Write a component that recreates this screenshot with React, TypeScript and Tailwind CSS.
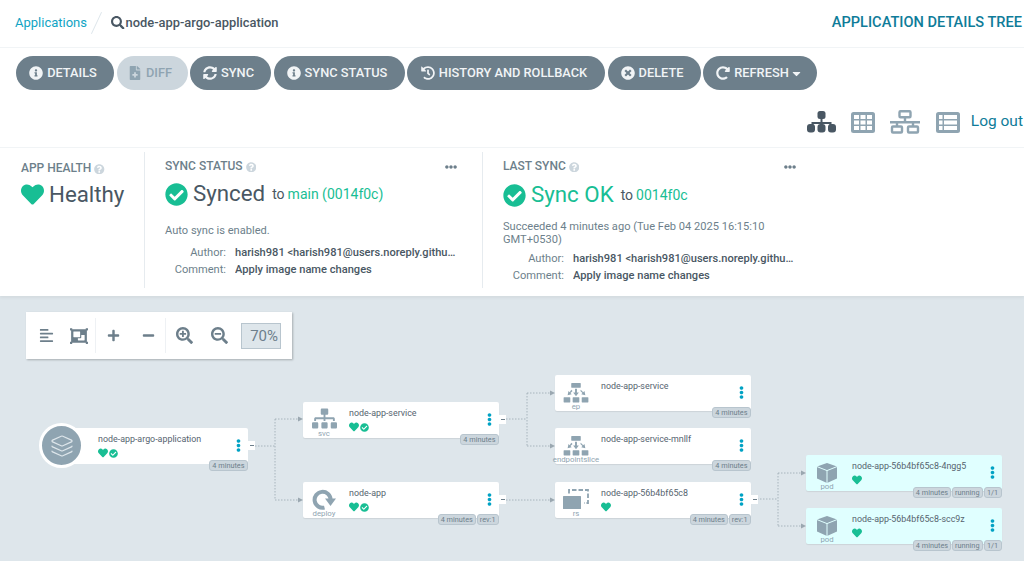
import type { ReactNode } from 'react';
import {
  FaAlignLeft, FaCaretDown, FaCheckCircle, FaEllipsisH, FaEllipsisV, FaFileMedical, FaHeart,
  FaHistory, FaInfoCircle, FaMinus, FaObjectGroup, FaPlus, FaQuestionCircle, FaRedoAlt,
  FaSearch, FaSearchMinus, FaSearchPlus, FaSitemap, FaSyncAlt, FaTimesCircle,
} from 'react-icons/fa';
import { Layers } from 'lucide-react';

const buttons = [
  { label: 'DETAILS', icon: <FaInfoCircle />, width: 'w-[98px]' },
  { label: 'DIFF', icon: <FaFileMedical />, width: 'w-[71px]', disabled: true },
  { label: 'SYNC', icon: <FaSyncAlt />, width: 'w-[81px]' },
  { label: 'SYNC STATUS', icon: <FaInfoCircle />, width: 'w-[131px]' },
  { label: 'HISTORY AND ROLLBACK', icon: <FaHistory />, width: 'w-[198px]' },
  { label: 'DELETE', icon: <FaTimesCircle />, width: 'w-[93px]' },
  { label: 'REFRESH', icon: <FaRedoAlt />, width: 'w-[114px]', caret: true },
];

const TreeViewIcon = () => (
  <svg viewBox="0 0 29 22" className="w-[29px] h-[22px] mr-[15px] fill-[#495763]">
    <rect x="10.5" y="0" width="8" height="8" rx="2.5" />
    <path d="M13.5 7h2v4h9v4h-2v-2h-7v2h-2v-2h-7v2h-2v-4h9z" />
    <rect x="0" y="13" width="8" height="8.5" rx="3" />
    <rect x="10.5" y="13" width="8" height="8.5" rx="3" />
    <rect x="21" y="13" width="8" height="8.5" rx="3" />
  </svg>
);

const PodViewIcon = () => (
  <svg viewBox="0 0 24 21" className="w-[24px] h-[21px] mr-[15px]">
    <rect width="24" height="21" rx="2.5" fill="#8fa4b1" />
    {[3, 9.5, 16].map((x) =>
      [3, 8.5, 14].map((y) => <rect key={`${x}-${y}`} x={x} y={y} width="5" height="4" fill="#fff" />),
    )}
  </svg>
);

const NetworkViewIcon = () => (
  <svg viewBox="0 0 30 24" className="w-[30px] h-[24px] mr-[16px] fill-none stroke-[#8fa4b1]" strokeWidth="2.4">
    <rect x="9.5" y="1.2" width="11" height="6" rx="1" />
    <path d="M15 7v5M0 12.2h30M7 12v4M23 12v4" />
    <rect x="2" y="16.5" width="10" height="6" rx="1" />
    <rect x="18" y="16.5" width="10" height="6" rx="1" />
  </svg>
);

const ListViewIcon = () => (
  <svg viewBox="0 0 24 21" className="w-[24px] h-[21px] mr-[11px]">
    <rect width="24" height="21" rx="2.5" fill="#8fa4b1" />
    {[3, 8.5, 14].map((y) => (
      <g key={y} fill="#fff">
        <rect x="3" y={y} width="3.5" height="4" />
        <rect x="8" y={y} width="13" height="4" />
      </g>
    ))}
  </svg>
);

const EndpointIcon = () => (
  <svg viewBox="0 0 26 21" className="w-[26px] h-[20px] mt-[4px] fill-[#8fa4b1]">
    <rect x="8" y="0" width="10" height="5" rx="0.5" />
    <rect x="0" y="15" width="7" height="5.5" rx="0.5" />
    <rect x="9.5" y="15" width="7" height="5.5" rx="0.5" />
    <rect x="19" y="15" width="7" height="5.5" rx="0.5" />
    <path d="M12 6h2v4h2l-3 4-3-4h2zM8 7l1.4 1.4-2.2 2.2 1.3 1.3-4.3.9.9-4.3 1.3 1.3zM18 7l2.6 2.8 1.3-1.3.9 4.3-4.3-.9 1.3-1.3-2.2-2.2z" />
  </svg>
);

const ReplicaIcon = () => (
  <svg viewBox="0 0 26 20" className="w-[26px] h-[20px] mt-[3px]">
    <rect x="0" y="7" width="18" height="13" fill="#8fa4b1" rx="0.5" />
    <path d="M6 4.5V1h19v13h-4" fill="none" stroke="#8fa4b1" strokeWidth="1.8" strokeDasharray="4.5 2" />
  </svg>
);

const DeployIcon = () => (
  <svg viewBox="0 0 24 21" className="w-[24px] h-[21px] mt-[3px]">
    <path d="M18.6 10.5A8 8 0 1 0 12.5 18.6" fill="none" stroke="#8fa4b1" strokeWidth="4" />
    <path d="M13 9.5H24L18.5 17z" fill="#8fa4b1" />
  </svg>
);

const PodIcon = () => (
  <svg viewBox="0 0 20 20" className="w-[20px] h-[20px] mt-[4px]">
    <path d="M10 0L20 3.6V15.6L10 20L0 15.6V3.6z" fill="#8fa4b1" />
    <path d="M0 3.6L10 7.6L20 3.6M10 7.6V20" fill="none" stroke="#e0ffff" strokeWidth="1" />
  </svg>
);

type NodeData = {
  name: string;
  kind: string;
  place: string;
  icon: ReactNode;
  status?: 'both' | 'health';
  pills: string[];
  pod?: boolean;
  collapse?: boolean;
};

const nodes: NodeData[] = [
  { name: 'node-app-service', kind: 'svc', place: 'left-[303px] top-[106px]', icon: <FaSitemap className="text-[25px]" />, status: 'both', pills: ['4 minutes'], collapse: true },
  { name: 'node-app', kind: 'deploy', place: 'left-[303px] top-[186px]', icon: <DeployIcon />, status: 'both', pills: ['4 minutes', 'rev:1'], collapse: true },
  { name: 'node-app-service', kind: 'ep', place: 'left-[555px] top-[79px]', icon: <EndpointIcon />, pills: ['4 minutes'] },
  { name: 'node-app-service-mnllf', kind: 'endpointslice', place: 'left-[555px] top-[132px]', icon: <EndpointIcon />, pills: ['4 minutes'] },
  { name: 'node-app-56b4bf65c8', kind: 'rs', place: 'left-[555px] top-[186px]', icon: <ReplicaIcon />, status: 'health', pills: ['4 minutes', 'rev:1'], collapse: true },
  { name: 'node-app-56b4bf65c8-4ngg5', kind: 'pod', place: 'left-[806px] top-[159px]', icon: <PodIcon />, status: 'health', pills: ['4 minutes', 'running', '1/1'], pod: true },
  { name: 'node-app-56b4bf65c8-scc9z', kind: 'pod', place: 'left-[806px] top-[212px]', icon: <PodIcon />, status: 'health', pills: ['4 minutes', 'running', '1/1'], pod: true },
];

const edges = [
  'M255 150H275M275 123V204M275 123H298M275 204H298',
  'M506 123H527M527 97V150M527 97H550M527 150H550',
  'M506 204H550',
  'M757 203H778M778 177V230M778 177H801M778 230H801',
];

const arrows = [[303, 123], [303, 204], [555, 97], [555, 150], [555, 204], [806, 177], [806, 230]];

const Pills = ({ items }: { items: string[] }) => (
  <div className="absolute top-[32px] right-[0.5px] flex gap-[1px]">
    {items.map((p) => (
      <span key={p} className="h-[11px] min-w-[18px] px-[2px] flex items-center justify-center rounded-[3px] bg-[#ccd6dd] border border-[#b8c5ce] text-[#6d7f8b] text-[7.3px] leading-none">
        {p}
      </span>
    ))}
  </div>
);

const Dots = () => (
  <FaEllipsisV className="absolute top-[11px] right-[3.5px] text-[13px] text-[#00a2c4]" />
);

const Status = ({ kind }: { kind?: 'both' | 'health' }) => {
  if (!kind) return null;
  return (
    <div className="flex items-center gap-[1px] mt-[3px] text-[#18be94]">
      <FaHeart className="text-[10px]" />
      {kind === 'both' && <FaCheckCircle className="text-[9px]" />}
    </div>
  );
};

const Collapse = () => (
  <div className="absolute top-[13px] left-full w-[7px] h-[9px] bg-white flex items-center justify-center">
    <div className="w-[4px] h-[1px] bg-[#6d7f8b]" />
  </div>
);

const GraphNode = ({ node }: { node: NodeData }) => (
  <div className={`absolute w-[196px] h-[36px] rounded-[2px] shadow-[0_1px_1px_rgba(0,0,0,0.08)] ${node.pod ? 'bg-[#e0ffff]' : 'bg-white'} ${node.place}`}>
    <div className="absolute left-0 top-0 w-[42px] h-[42px] flex flex-col items-center pt-[4px] text-[#8fa4b1]">
      {node.icon}
      <span className="absolute top-[27px] text-[7.8px] leading-[10px] text-[#8fa4b1] whitespace-nowrap">{node.kind}</span>
    </div>
    <div className="absolute left-[46px] top-[6px] text-[#56646f] text-[8.9px] leading-[11px] whitespace-nowrap">
      {node.name}
      <Status kind={node.status} />
    </div>
    <Dots />
    <Pills items={node.pills} />
    {node.collapse && <Collapse />}
  </div>
);

const Help = () => <FaQuestionCircle className="inline text-[10.5px] text-[#ccd6dd] ml-[3px]" />;

const Commit = ({ author, comment }: { author: string; comment: string }) => (
  <div className="grid grid-cols-[61px_1fr] gap-x-[9px] text-[11.1px] leading-[16.5px]">
    <span className="text-right text-[#6d7f8b]">Author:</span>
    <span className="font-medium text-[#495763] truncate">{author}</span>
    <span className="text-right text-[#6d7f8b]">Comment:</span>
    <span className="font-medium text-[#495763] truncate">{comment}</span>
  </div>
);

export default function App() {
  return (
    <div className="w-[1024px] h-[561px] overflow-hidden flex flex-col bg-white font-['Roboto',sans-serif]">
      <header className="h-[48px] shrink-0 flex items-center pl-[15px] pb-[2px] border-b border-[#f1f4f6]">
        <a className="text-[13px] text-[#11a4c4] w-[71px]">Applications</a>
        <div className="w-[1px] h-[24px] bg-[#dee6eb] rotate-[25deg] ml-[10px] mr-[14px]" />
        <FaSearch className="text-[13.5px] text-[#495763] mr-[1px]" />
        <span className="text-[12.9px] font-medium text-[#495763]">node-app-argo-application</span>
        <span className="ml-auto mr-[2px] text-[14.6px] font-medium text-[#0f7c99]">APPLICATION DETAILS TREE</span>
      </header>

      <section className="h-[100px] shrink-0 border-b border-[#f1f4f6] pl-[16px] pt-[8px]">
        <div className="flex gap-[2.5px]">
          {buttons.map((b) => (
            <button
              key={b.label}
              className={`${b.width} h-[34px] rounded-full flex items-center justify-center gap-[4px] text-[12.8px] font-medium ${b.caret ? 'pr-[1px]' : 'pr-[4px]'} ${b.disabled ? 'bg-[#ccd6dd] text-[#8fa4b1]' : 'bg-[#6d7f8b] text-[#f1f4f6]'}`}
            >
              <span className="text-[14px]">{b.icon}</span>
              {b.label}
              {b.caret && <FaCaretDown className="text-[13px] -ml-[3px]" />}
            </button>
          ))}
        </div>
        <div className="flex items-center justify-end mt-[20px] pr-[1px]">
          <TreeViewIcon />
          <PodViewIcon />
          <NetworkViewIcon />
          <ListViewIcon />
          <span className="text-[15.5px] text-[#0f7c99]">Log out</span>
        </div>
      </section>

      <section className="h-[148px] shrink-0 flex pt-[4px] pb-[8px] shadow-[0_2px_3px_rgba(0,0,0,0.05)] relative z-10">
        <div className="w-[145px] border-r border-[#e6ebef] pl-[21px] pt-[9px]">
          <div className="text-[12px] leading-[14px] font-medium text-[#6d7f8b]">APP HEALTH<Help /></div>
          <div className="flex items-center gap-[5px] mt-[3px] text-[#495763] text-[22.3px] leading-[32px]">
            <FaHeart className="text-[#18be94] text-[23px]" />
            Healthy
          </div>
        </div>

        <div className="w-[338px] border-r border-[#e6ebef] pl-[20px] pr-[24px] pt-[7px] relative">
          <div className="text-[12px] leading-[14px] font-medium text-[#6d7f8b]">SYNC STATUS<Help /></div>
          <FaEllipsisH className="absolute right-[25px] top-[9px] text-[12px] text-[#6d7f8b]" />
          <div className="flex items-center mt-[5px] h-[32px]">
            <FaCheckCircle className="text-[#18be94] text-[23px] mr-[5px]" />
            <span className="text-[22.3px] text-[#495763]">Synced</span>
            <span className="ml-[7px] text-[14px] text-[#495763]">to</span>
            <span className="ml-[3px] text-[14px] text-[#18be94]">main (0014f0c)</span>
          </div>
          <div className="text-[11.1px] leading-[16px] text-[#6d7f8b] mt-[13px] mb-[6px]">Auto sync is enabled.</div>
          <Commit author="harish981 <harish981@users.noreply.github.com>" comment="Apply image name changes" />
        </div>

        <div className="w-[337px] pl-[20px] pr-[24px] pt-[7px] relative">
          <div className="text-[12px] leading-[14px] font-medium text-[#6d7f8b]">LAST SYNC<Help /></div>
          <FaEllipsisH className="absolute right-[24px] top-[9px] text-[12px] text-[#6d7f8b]" />
          <div className="flex items-center mt-[5px] h-[34px]">
            <FaCheckCircle className="text-[#18be94] text-[23px] mr-[5px]" />
            <span className="text-[22.3px] text-[#18be94]">Sync OK</span>
            <span className="ml-[7px] text-[14px] text-[#495763]">to</span>
            <span className="ml-[3px] text-[14px] text-[#18be94]">0014f0c</span>
          </div>
          <div className="text-[11.1px] leading-[13px] text-[#6d7f8b] mt-[8px] mb-[5px]">
            Succeeded 4 minutes ago (Tue Feb 04 2025 16:15:10 GMT+0530)
          </div>
          <Commit author="harish981 <harish981@users.noreply.github.com>" comment="Apply image name changes" />
        </div>
      </section>

      <main className="flex-1 relative bg-[#dee6eb] pl-[26px] pt-[16px]">
        <div className="w-[266px] h-[47px] bg-white shadow-[1px_1px_2px_rgba(0,0,0,0.25)] flex items-center text-[#6d7f8b]">
          <div className="w-[70px] flex items-center justify-between pl-[13px] pr-[7px] h-[35px] border-r border-[#eef1f4]">
            <FaAlignLeft className="text-[15px]" />
            <FaObjectGroup className="text-[18px]" />
          </div>
          <div className="w-[70px] flex items-center justify-between pl-[11px] pr-[10px] h-[35px] border-r border-[#eef1f4]">
            <FaPlus className="text-[13px]" />
            <FaMinus className="text-[13px]" />
          </div>
          <div className="flex items-center gap-[18px] pl-[10px] pr-[13px]">
            <FaSearchPlus className="text-[17px]" />
            <FaSearchMinus className="text-[17px]" />
          </div>
          <div className="w-[40px] h-[26px] bg-[#dee6eb] border border-[#b8c5ce] text-right pr-[2px] text-[15px] leading-[24px]">70%</div>
        </div>

        <svg className="absolute left-0 top-0 w-[1024px] h-[265px]" viewBox="0 0 1024 265" fill="none">
          {edges.map((d) => (
            <path key={d} d={d} stroke="#9aa7b0" strokeWidth="0.8" strokeDasharray="1.5 1.5" />
          ))}
          {arrows.map(([x, y]) => (
            <path key={`${x}-${y}`} d={`M${x - 5} ${y - 2.5}L${x} ${y}L${x - 5} ${y + 2.5}Z`} fill="#9aa7b0" />
          ))}
        </svg>

        <div className="absolute left-[70px] top-[132px] w-[178px] h-[36px] bg-white rounded-[2px]">
          <div className="absolute left-[28px] top-[6px] text-[#56646f] text-[8.9px] leading-[11px] whitespace-nowrap">
            node-app-argo-application
            <Status kind="both" />
          </div>
          <Dots />
          <Pills items={['4 minutes']} />
          <Collapse />
        </div>
        <div className="absolute left-[39px] top-[127px] w-[45px] h-[45px] rounded-full bg-[#8fa4b1] border-[3px] border-white flex items-center justify-center">
          <Layers className="w-[24px] h-[24px] text-[#dee6eb]" strokeWidth={1.2} />
        </div>

        {nodes.map((n) => (
          <GraphNode key={n.place} node={n} />
        ))}
      </main>
    </div>
  );
}
